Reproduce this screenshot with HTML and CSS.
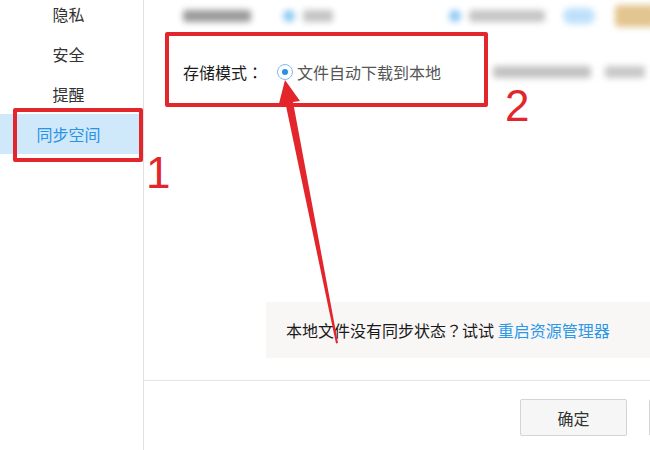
FILE: index.html
```html
<!DOCTYPE html>
<html lang="zh-CN">
<head>
    <meta charset="UTF-8">
    <meta name="viewport" content="width=device-width, initial-scale=1.0">
    <title>同步空间设置</title>
    <link rel="stylesheet" href="styles.css">
</head>
<body>
    <div class="window">
        <aside class="sidebar">
            <div class="nav-item">隐私</div>
            <div class="nav-item">安全</div>
            <div class="nav-item">提醒</div>
            <div class="nav-item active">同步空间</div>
        </aside>

        <main class="content">
            <section class="settings">
                <div class="top-row">
                    <span class="blur blur-gray w68"></span>
                    <span class="blur blur-dot"></span>
                    <span class="blur blur-gray w30"></span>
                    <span class="blur blur-dot small spacer"></span>
                    <span class="blur blur-gray w76"></span>
                    <span class="blur blur-pill"></span>
                    <span class="blur blur-gold"></span>
                </div>

                <div class="form-row">
                    <span class="label">存储模式<span class="punct" lang="zh-TW">：</span></span>
                    <span class="radio"><span class="radio-dot"></span></span>
                    <span class="radio-text">文件自动下载到本地</span>
                    <span class="blur blur-gray w98 after"></span>
                    <span class="blur blur-gray w40"></span>
                </div>

                <div class="tip-panel">
                    本地文件没有同步状态<span class="punct" lang="zh-TW">？</span>试试 <a class="link">重启资源管理器</a>
                </div>
            </section>

            <footer class="footer">
                <button class="btn">确定</button>
                <button class="btn"></button>
            </footer>
        </main>

        <!-- 标注 -->
        <div class="mark mark-nav"></div>
        <div class="mark mark-form"></div>
        <span class="mark-num num-1">1</span>
        <span class="mark-num num-2">2</span>
        <svg class="arrow" width="650" height="450" viewBox="0 0 650 450">
            <polygon fill="#e3262c" points="285,80 300,101 293,102 338,343 336,343.4 285.5,103.6 278.5,105.5"/>
        </svg>
    </div>
</body>
</html>
```

FILE: styles.css
```css
body {
    margin: 0;
    font-family: "Noto Sans CJK SC", "Liberation Sans", sans-serif;
    background: #fff;
    color: #333;
}

.window {
    position: relative;
    width: 650px;
    height: 450px;
    display: flex;
    overflow: hidden;
}

.sidebar {
    width: 143px;
    flex-shrink: 0;
    border-right: 1px solid #e2e2e2;
}

.nav-item {
    height: 40px;
    line-height: 40px;
    font-size: 16px;
    text-align: center;
    padding-right: 6px;
    color: #333;
}

.nav-item:first-child {
    margin-top: -6px;
}

.nav-item.active {
    background: #cfe8fa;
    color: #2a93e6;
}

.content {
    flex: 1;
    display: flex;
    flex-direction: column;
}

.settings {
    height: 380px;
    padding-left: 39px;
    box-sizing: border-box;
}

.top-row {
    height: 32px;
    display: flex;
    align-items: center;
    white-space: nowrap;
}

.blur {
    display: inline-block;
    flex-shrink: 0;
    filter: blur(3px);
}

.blur-gray {
    height: 12px;
    background: #9a9a9a;
    border-radius: 3px;
}

.w68 { width: 68px; }
.w30 { width: 30px; margin-left: 8px; background: #c4c4c4; }
.w76 { width: 76px; margin-left: 8px; background: #c6c6c6; }
.w98 { width: 98px; background: #c2c2c2; }
.w40 { width: 40px; margin-left: 14px; background: #c8c8c8; }

.blur-dot {
    width: 12px;
    height: 12px;
    border-radius: 50%;
    background: #8cc8f3;
    margin-left: 32px;
}

.blur-dot.spacer {
    margin-left: 116px;
}

.blur-pill {
    width: 32px;
    height: 16px;
    border-radius: 8px;
    background: #bfe0fa;
    margin-left: 18px;
}

.blur-gold {
    width: 44px;
    height: 22px;
    border-radius: 4px;
    background: #e3c58f;
    margin-left: 20px;
}

.form-row {
    height: 40px;
    margin-top: 20px;
    display: flex;
    align-items: center;
    white-space: nowrap;
    font-size: 16px;
}

.punct {
    font-family: "Noto Sans CJK TC", sans-serif;
}

.label {
    color: #1a1a1a;
}

.radio {
    width: 14px;
    height: 14px;
    border: 1.5px solid #7dbdf0;
    border-radius: 50%;
    margin-left: 14px;
    display: flex;
    align-items: center;
    justify-content: center;
    flex-shrink: 0;
}

.radio-dot {
    width: 6px;
    height: 6px;
    border-radius: 50%;
    background: #2a8fe3;
}

.radio-text {
    color: #555;
    margin-left: 4px;
}

.after {
    margin-left: 52px;
}

.tip-panel {
    margin-top: 210px;
    margin-left: 83px;
    height: 56px;
    line-height: 56px;
    padding-left: 20px;
    background: #f9f7f6;
    font-size: 16px;
    color: #1a1a1a;
    white-space: nowrap;
}

.link {
    color: #2d97e8;
}

.footer {
    height: 70px;
    border-top: 1px solid #e6e6e6;
    padding: 18px 0 0 376px;
    box-sizing: border-box;
    display: flex;
    gap: 22px;
    overflow: hidden;
}

.btn {
    width: 107px;
    height: 37px;
    flex-shrink: 0;
    border: 1px solid #d4d4d4;
    border-radius: 2px;
    background: #f6f6f6;
    font-family: inherit;
    font-size: 16px;
    color: #333;
}

/* 标注 */
.mark {
    position: absolute;
    border: 4px solid #e3262c;
    border-radius: 2px;
    box-sizing: border-box;
}

.mark-nav {
    left: 13px;
    top: 108px;
    width: 130px;
    height: 54px;
}

.mark-form {
    left: 165px;
    top: 32px;
    width: 323px;
    height: 75px;
}

.mark-num {
    position: absolute;
    font-family: "Liberation Sans", sans-serif;
    font-size: 44px;
    line-height: 1;
    color: #e3262c;
}

.num-1 {
    left: 146px;
    top: 151px;
}

.num-2 {
    left: 505px;
    top: 84px;
}

.arrow {
    position: absolute;
    left: 0;
    top: 0;
}
```
